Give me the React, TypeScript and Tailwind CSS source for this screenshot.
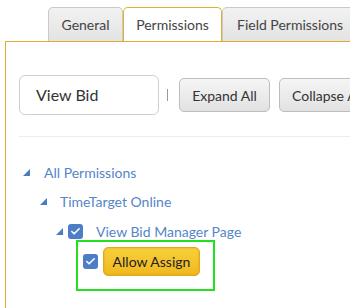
import { Check } from "lucide-react"

function Arrow() {
  return (
    <svg width="7" height="7" viewBox="0 0 7 7" className="shrink-0">
      <polygon points="0,7 7,7 7,0" fill="#4a7cc4" />
    </svg>
  )
}

function CheckBox() {
  return (
    <span className="flex h-[15px] w-[15px] shrink-0 items-center justify-center rounded-[3px] bg-[#4b7ec6]">
      <Check className="h-[11px] w-[11px] text-white" strokeWidth={3.5} />
    </span>
  )
}

export default function App() {
  return (
    <div className="h-[308px] w-[350px] overflow-hidden bg-white font-['Lato',sans-serif]">
      {/* Tabs */}
      <div className="flex h-[41px] items-end pl-[48px]">
        <div className="flex h-[34px] w-[75px] shrink-0 items-center justify-center rounded-t-[5px] border border-b-0 border-[#c9c9c9] bg-gradient-to-b from-[#f2f2f2] to-[#e3e3e3] text-[14px] text-[#444]">
          General
        </div>
        <div className="flex h-[34px] w-[99px] shrink-0 items-center justify-center rounded-t-[5px] border-[1.5px] border-b-0 border-[#e2b12e] bg-white text-[14px] text-[#444]">
          Permissions
        </div>
        <div className="flex h-[34px] w-[140px] shrink-0 items-center justify-start rounded-t-[5px] border border-b-0 border-[#c9c9c9] bg-gradient-to-b from-[#f2f2f2] to-[#e3e3e3] pl-[14px] text-[14px] text-[#444]">
          <span className="whitespace-nowrap">Field Permissions</span>
        </div>
      </div>

      {/* Panel */}
      <div className="ml-[5px] h-[267px] border-l-[1.5px] border-t-[1.5px] border-[#e0ad2c] pt-[33px] pl-[13px]">
        <div className="flex items-center">
          <div className="flex h-[40px] w-[140px] shrink-0 items-center rounded-[6px] border border-[#cfcfcf] pl-[16px] text-[16px] text-[#333]">
            View Bid
          </div>
          <span className="ml-[8px] h-[12px] w-px shrink-0 bg-[#999]" />
          <button className="ml-[11px] flex h-[34px] w-[91px] shrink-0 items-center justify-center rounded-[5px] border border-[#bdbdbd] bg-gradient-to-b from-[#f5f5f5] to-[#e2e2e2] text-[14px] text-[#333]">
            Expand All
          </button>
          <button className="ml-[9px] flex h-[34px] w-[100px] shrink-0 items-center justify-start rounded-[5px] border border-[#bdbdbd] bg-gradient-to-b from-[#f5f5f5] to-[#e2e2e2] pl-[12px] text-[14px] text-[#333]">
            <span className="whitespace-nowrap">Collapse All</span>
          </button>
        </div>

        <div className="mt-[21px] h-px bg-[#ececec]" />

        {/* Tree */}
        <div className="mt-[24px] text-[14px] text-[#5585c8]">
          <div className="flex h-[22px] items-center pl-[4px]">
            <Arrow />
            <span className="ml-[14px]">All Permissions</span>
          </div>
          <div className="mt-[7px] flex h-[22px] items-center pl-[21px]">
            <Arrow />
            <span className="ml-[13px]">TimeTarget Online</span>
          </div>
          <div className="mt-[8px] flex h-[22px] items-center pl-[37px]">
            <Arrow />
            <span className="ml-[5px]">
              <CheckBox />
            </span>
            <span className="ml-[13px]">View Bid Manager Page</span>
          </div>
          <div className="ml-[57px] mt-[-2px] flex h-[51px] w-[139px] items-start border-2 border-[#22e01f] pl-[5px] pt-[5px]">
            <span className="mt-[7px]">
              <CheckBox />
            </span>
            <button className="ml-[5px] flex h-[29px] w-[97px] items-center justify-center rounded-[5px] border border-[#e0a91a] bg-gradient-to-b from-[#f8cf3c] to-[#f0b81d] text-[14px] text-[#222] shadow-[inset_0_0_2px_rgba(200,140,0,0.6)]">
              Allow Assign
            </button>
          </div>
        </div>
      </div>
    </div>
  )
}
